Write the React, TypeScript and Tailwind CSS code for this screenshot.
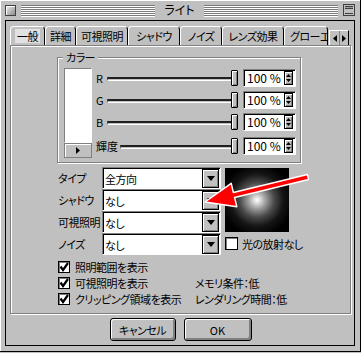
import React from "react";

const raised =
  "bg-[#c0c0c0] border border-black shadow-[inset_1px_1px_0_#fff,inset_-1px_-1px_0_#808080]";
const sunken =
  "bg-white border border-t-[#808080] border-l-[#808080] border-r-white border-b-white shadow-[inset_1px_1px_0_#000]";
const etched = "border border-[#808080] shadow-[inset_1px_1px_0_#fff,1px_1px_0_#fff]";

const tabs = [
  { label: "一般", w: "w-[35px]" },
  { label: "詳細", w: "w-[31px]" },
  { label: "可視照明", w: "w-[52px]" },
  { label: "シャドウ", w: "w-[52px]" },
  { label: "ノイズ", w: "w-[42px]" },
  { label: "レンズ効果", w: "w-[62px]" },
  { label: "グローエ", w: "w-[44px]" },
];

const sliders = [
  { label: "R", lw: "w-[11px]", mt: "mt-[1px]" },
  { label: "G", lw: "w-[11px]", mt: "mt-[4px]" },
  { label: "B", lw: "w-[11px]", mt: "mt-[4px]" },
  { label: "輝度", lw: "w-[24px]", mt: "mt-[6px]" },
];

const selects = [
  { label: "タイプ", value: "全方向" },
  { label: "シャドウ", value: "なし" },
  { label: "可視照明", value: "なし" },
  { label: "ノイズ", value: "なし" },
];

const Stripes = () => (
  <div className="flex-1 flex flex-col gap-[1px] h-[11px]">
    {Array.from({ length: 6 }).map((_, i) => (
      <div key={i} className="h-[1px] bg-[#7a7a7a] shadow-[0_1px_0_#fff]" />
    ))}
  </div>
);

const Check = ({ checked }: { checked: boolean }) => (
  <div className="w-[12px] h-[12px] shrink-0 bg-white border border-black shadow-[inset_1px_1px_0_#808080]">
    {checked && (
      <svg width="10" height="10" viewBox="0 0 10 10" className="block">
        <path d="M1.5 4.5 L4 8 L9 1" stroke="#000" strokeWidth="2.2" fill="none" />
      </svg>
    )}
  </div>
);

const SelectBox = ({ value }: { value: string }) => (
  <div className={`w-[119px] h-[22px] flex items-center ${sunken}`}>
    <span className="flex-1 pl-[2px] pt-[1px]">{value}</span>
    <div className={`w-[17px] h-[19px] mr-[1px] mt-[1px] flex items-center justify-center ${raised} border-[#808080]`}>
      <svg width="8" height="5" viewBox="0 0 8 5">
        <path d="M0 0 H8 L4 5 Z" fill="#000" />
      </svg>
    </div>
  </div>
);

export default function App() {
  return (
    <div className="relative w-[361px] h-[353px] bg-[#c0c0c0] font-['Noto_Sans_CJK_JP','Noto_Sans',sans-serif] text-black text-[11px] leading-[12px] tracking-[-0.5px] [font-feature-settings:'palt']">
      <div className="w-[361px] h-[352px] border-r border-b border-black shadow-[inset_1px_1px_0_#fff] px-[5px] pb-[5px] flex flex-col">
        {/* title bar */}
        <div className="h-[20px] flex items-center gap-[5px] shrink-0">
          <div className="w-[11px] h-[11px] border border-[#404040] bg-[linear-gradient(135deg,#f0f0f0,#8a8a8a)] shadow-[inset_1px_1px_0_#fff]" />
          <Stripes />
          <span className="text-[12px] tracking-[0px] px-[4px]">ライト</span>
          <Stripes />
          <div className="w-[12px] h-[12px] border border-[#404040] bg-[#c0c0c0] flex flex-col justify-center gap-[2px] px-[1px]">
            <div className="h-[3px] border-t border-b border-[#404040] bg-[#a0a0a0]" />
            <div className="h-[3px] border-b border-[#404040]" />
          </div>
        </div>

        {/* frame */}
        <div className="flex-1 border border-black flex flex-col pl-[4px] pr-[3px] pt-[5px]">
          {/* tabs */}
          <div className="flex items-end h-[19px]">
            {tabs.map((t, i) => (
              <div
                key={t.label}
                className={`${t.w} h-[19px] flex items-center overflow-hidden whitespace-nowrap border-t border-l border-r border-t-white border-l-white border-r-black rounded-t-[4px] ${
                  i === 6 ? "justify-start pl-[5px]" : "justify-center"
                }`}
              >
                <span className={i === 0 ? "bg-[#e2e2e2] px-[2px] py-[1px]" : ""}>{t.label}</span>
              </div>
            ))}
            <div className="ml-[1px] w-[20px] h-[15px] flex border-t border-l border-r border-t-white border-l-white border-r-black">
              <div className="w-[10px] flex items-center justify-center border-r border-[#808080]">
                <svg width="4" height="7" viewBox="0 0 4 7">
                  <path d="M4 0 V7 L0 3.5 Z" fill="#000" />
                </svg>
              </div>
              <div className="flex-1 flex items-center justify-center">
                <svg width="4" height="7" viewBox="0 0 4 7">
                  <path d="M0 0 V7 L4 3.5 Z" fill="#000" />
                </svg>
              </div>
            </div>
          </div>

          {/* panel */}
          <div className={`w-[341px] h-[269px] ${etched} pl-[46px] pt-[11px] flex flex-col`}>
            {/* color group */}
            <div className={`relative w-[244px] h-[106px] ${etched} flex pl-[6px] pt-[10px]`}>
              <span className="absolute left-[5px] top-[-7px] px-[3px] bg-[#c0c0c0]">カラー</span>
              <div className="w-[28px] flex flex-col">
                <div className="h-[75px] bg-white border border-t-[#808080] border-l-[#808080] border-r-white border-b-white" />
                <div className="h-[15px] border border-[#808080] bg-[#c0c0c0] flex items-center justify-center shadow-[inset_1px_1px_0_#fff]">
                  <svg width="4" height="7" viewBox="0 0 4 7">
                    <path d="M0 0 V7 L4 3.5 Z" fill="#000" />
                  </svg>
                </div>
              </div>
              <div className="ml-[4px] w-[200px] flex flex-col">
                {sliders.map((s) => (
                  <div key={s.label} className={`flex items-center h-[18px] ${s.mt}`}>
                    <span className={`${s.lw} shrink-0 tracking-[0px]`}>{s.label}</span>
                    <div className="flex-1 h-[4px] border-t-2 border-b border-l border-t-[#202020] border-b-white border-l-[#606060] mt-[1px]" />
                    <div className={`w-[7px] h-[16px] ${raised} rounded-[1px]`} />
                    <div className={`ml-[5px] w-[53px] h-[18px] flex items-center ${sunken}`}>
                      <span className="flex-1 pl-[3px] tracking-[0px] text-[12px]">100 %</span>
                      <div className={`w-[9px] h-[14px] mr-[2px] flex flex-col items-center justify-center gap-[2px] ${raised} border-[#808080]`}>
                        <svg width="5" height="3" viewBox="0 0 5 3">
                          <path d="M0 3 H5 L2.5 0 Z" fill="#000" />
                        </svg>
                        <svg width="5" height="3" viewBox="0 0 5 3">
                          <path d="M0 0 H5 L2.5 3 Z" fill="#000" />
                        </svg>
                      </div>
                    </div>
                  </div>
                ))}
              </div>
            </div>

            {/* selects + preview */}
            <div className="flex mt-[4px]">
              <div className="flex flex-col">
                {selects.map((s) => (
                  <div key={s.label} className="flex items-center h-[22px]">
                    <span className="w-[45px] pl-[1px] whitespace-nowrap">{s.label}</span>
                    <SelectBox value={s.value} />
                  </div>
                ))}
              </div>
              <div className="ml-[4px] flex flex-col">
                <div className="mt-[1px] w-[64px] h-[64px] bg-[radial-gradient(circle_at_50%_50%,#ffffff_0%,#e4e4e4_6%,#9a9a9a_20%,#4a4a4a_38%,#151515_58%,#000_80%)]" />
                <div className="mt-[5px] flex items-center gap-[4px]">
                  <div className="w-[13px] h-[13px] bg-white border border-black shadow-[inset_1px_1px_0_#808080]" />
                  <span>光の放射なし</span>
                </div>
              </div>
            </div>

            {/* checkboxes */}
            <div className="mt-[4px] pl-[1px] flex flex-col">
              <div className="h-[16px] flex items-center gap-[5px]">
                <Check checked />
                <span>照明範囲を表示</span>
              </div>
              <div className="h-[16px] grid grid-cols-[137px_auto] items-center">
                <div className="flex items-center gap-[5px]">
                  <Check checked />
                  <span>可視照明を表示</span>
                </div>
                <span>メモリ条件：低</span>
              </div>
              <div className="h-[16px] grid grid-cols-[137px_auto] items-center">
                <div className="flex items-center gap-[5px] whitespace-nowrap">
                  <Check checked />
                  <span>クリッピング領域を表示</span>
                </div>
                <span className="whitespace-nowrap">レンダリング時間：低</span>
              </div>
            </div>
          </div>

          {/* buttons */}
          <div className="mt-[4px] flex justify-center gap-[8px]">
            <button className="w-[66px] h-[23px] bg-[#c0c0c0] border border-black rounded-[3px] shadow-[inset_1px_1px_0_#fff,inset_-2px_-2px_0_#808080]">
              キャンセル
            </button>
            <button className="w-[68px] h-[23px] bg-[#c0c0c0] border border-black rounded-[3px] shadow-[inset_1px_1px_0_#fff,inset_-2px_-2px_0_#808080] tracking-[0px]">
              OK
            </button>
          </div>
        </div>
      </div>

      {/* red annotation arrow */}
      <svg className="absolute left-0 top-0 pointer-events-none" width="361" height="353" viewBox="0 0 361 353">
        <polygon
          points="307.4,174.6 233.4,192.6 231.2,183.3 205,202 236.8,206.7 234.6,197.4 308.6,179.4"
          fill="#ff0000"
          stroke="#fff"
          strokeWidth="1.5"
          strokeLinejoin="round"
        />
      </svg>
    </div>
  );
}
